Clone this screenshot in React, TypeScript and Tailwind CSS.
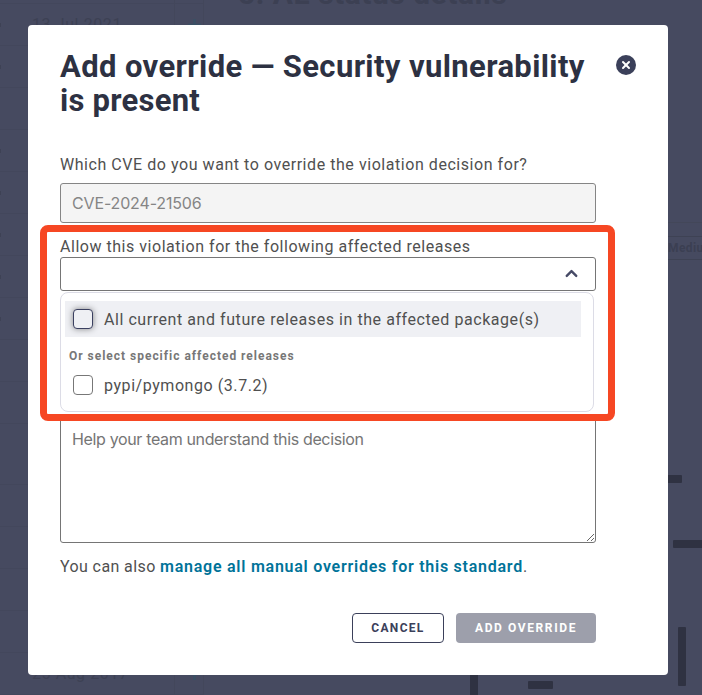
import { ReactNode } from 'react';
import { ChevronUp, X } from 'lucide-react';

const rows = [
    { date: '', height: 'h-[4px]' },
    { date: '13 Jul 2021', height: 'h-[42px]', dot: true },
    { date: '', height: 'h-[42px]', dot: true },
    { date: '', height: 'h-[42px]' },
    { date: '', height: 'h-[42px]', dot: true },
    { date: '', height: 'h-[42px]', dot: true },
    { date: '', height: 'h-[42px]', dot: true },
    { date: '', height: 'h-[42px]', dot: true },
    { date: '', height: 'h-[42px]', dot: true },
    { date: '', height: 'h-[42px]' },
    { date: '', height: 'h-[42px]' },
    { date: '', height: 'h-[61px]' },
    { date: '', height: 'h-[42px]' },
    { date: '', height: 'h-[42px]' },
    { date: '', height: 'h-[42px]' },
    { date: '', height: 'h-[42px]' },
    { date: '25 Aug 2017', height: 'h-[42px]' },
];

function Backdrop() {
    return (
        <div className="flex h-full w-full bg-[#464a60]">
            <div className="flex w-[204px] flex-col border-r border-[#43475b]">
                {rows.map((row, i) => (
                    <div key={i} className={`${row.height} flex shrink-0 items-center border-b border-[#43475c]`}>
                        <span className={`h-[4px] w-px ${row.dot ? 'bg-[#3e4255]' : ''}`} />
                        <span className="ml-[31px] w-[142px] text-[16px] tracking-[0.6px] whitespace-nowrap text-[#3d4154]">{row.date}</span>
                        <span className="h-full w-px bg-[#43475b]" />
                        {row.date && (
                            <span className="ml-[13px] flex h-[12px] w-[13px] items-center justify-center">
                                <svg width="13" height="12" viewBox="0 0 13 12" stroke="#3a5064" strokeWidth="2.5">
                                    <path d="M6.5 0v12M0 6h13" />
                                </svg>
                            </span>
                        )}
                    </div>
                ))}
            </div>
            <div className="relative flex-1">
                <h2 className="-mt-[22px] ml-[34px] text-[30px] leading-[32px] font-bold tracking-[0.5px] whitespace-nowrap text-[#3c4053]">
                    5. AL status details
                </h2>
                <div className="absolute top-[222px] right-0 w-[40px] border-t border-[#434759] pt-[13px]">
                    <div className="border-y border-[#3e4254] pl-[6px] text-[12px] leading-[22px] font-bold tracking-[0.4px] text-[#3b3f52]">Mediu</div>
                </div>
                <svg className="absolute top-0 right-0" width="500" height="695" viewBox="202 0 500 695" fill="#2f3242">
                    <rect x="660" y="475" width="22" height="8" rx="1" />
                    <rect x="673" y="540" width="40" height="8" rx="1" />
                    <rect x="678" y="627" width="8" height="59" rx="1" />
                    <rect x="470" y="660" width="8" height="40" rx="1" />
                    <rect x="528" y="681" width="25" height="8" rx="1" />
                </svg>
            </div>
        </div>
    );
}

function Option({ children, active }: { children: ReactNode; active?: boolean }) {
    return (
        <div className={`flex h-9 w-[516px] items-center pl-2 ${active ? 'bg-[#eff0f4]' : ''}`}>
            <span
                className={`h-5 w-5 rounded-[4px] border ${
                    active ? 'border-[#3b4060] bg-[#eff0f4] shadow-[0_0_6px_rgba(0,0,0,0.45)]' : 'border-[#777] bg-white'
                }`}
            />
            <span className="ml-[11px] pt-[2px] text-[16px] tracking-[0.56px] whitespace-nowrap">{children}</span>
        </div>
    );
}

export default function App() {
    return (
        <div className="relative h-[695px] w-[702px] overflow-hidden font-['Roboto',sans-serif]">
            <Backdrop />

            {/* Modal */}
            <div className="absolute inset-0 flex items-center pt-[5px] pl-7">
                <div className="relative h-[650px] w-[640px] rounded-[4px] bg-white px-8 pt-[25px] text-[#505050]">
                    <div className="flex h-[103px] items-start justify-between">
                        <h1 className="w-[550px] text-[31px] leading-[34px] font-bold text-[#2d3142]">
                            <span className="block tracking-[0.38px] whitespace-nowrap">Add override — Security vulnerability</span>
                            <span className="block tracking-[0.25px]">is present</span>
                        </h1>
                        <button className="mt-[5px] flex h-5 w-5 items-center justify-center rounded-full bg-[#3b405a] text-white">
                            <X size={12} strokeWidth={4} />
                        </button>
                    </div>

                    <label className="block h-[30px] text-[16px] leading-6 tracking-[0.55px] whitespace-nowrap">
                        Which CVE do you want to override the violation decision for?
                    </label>
                    <div className="flex h-10 w-[536px] items-center rounded-[3px] border border-[#858585] bg-[#f4f4f4] pl-[11px] font-['Inter',sans-serif] text-[16px] tracking-[-0.15px] text-[#858585]">
                        CVE-2024-21506
                    </div>

                    <label className="mt-[12px] block h-[22px] text-[16px] leading-6 tracking-[0.53px] whitespace-nowrap">
                        Allow this violation for the following affected releases
                    </label>
                    <div className="relative">
                        <div className="flex h-[34px] w-[536px] items-center justify-end rounded-[3px] border border-[#757575] bg-white pr-[14px] pb-[2px] text-[#464a66]">
                            <ChevronUp size={19} strokeWidth={3} />
                        </div>
                        {/* Dropdown */}
                        <div className="absolute top-[35px] left-0 z-10 h-[120px] w-[534px] rounded-[8px] border border-[#dcdce6] bg-white pt-2 pl-1">
                            <Option active>All current and future releases in the affected package(s)</Option>
                            <div className="h-[30px] pl-1 text-[12px] leading-[38px] font-bold tracking-[0.98px] text-[#777]">
                                Or select specific affected releases
                            </div>
                            <Option>pypi/pymongo (3.7.2)</Option>
                        </div>
                    </div>

                    <textarea
                        className="mt-[124px] block h-[128px] w-[536px] resize rounded-[3px] border border-[#757575] px-[11px] pt-[11px] font-['Inter',sans-serif] text-[16px] tracking-[-0.35px] placeholder:text-[#757575]"
                        placeholder="Help your team understand this decision"
                    />

                    <p className="mt-[12px] text-[16px] leading-6 tracking-[0.4px] whitespace-nowrap">
                        You can also{' '}
                        <a className="font-semibold tracking-[0.75px] text-[#007399]">manage all manual overrides for this standard</a>.
                    </p>

                    <div className="mt-[34px] flex w-[536px] justify-end gap-3">
                        <button className="h-[30px] w-[92px] rounded-[4px] border border-[#3b405a] text-[12px] font-bold tracking-[1.3px] text-[#3b405a]">
                            CANCEL
                        </button>
                        <button className="h-[30px] w-[140px] rounded-[4px] bg-[#9d9fab] text-[12px] font-bold tracking-[1.6px] text-white">
                            ADD OVERRIDE
                        </button>
                    </div>

                    {/* Highlight */}
                    <div className="pointer-events-none absolute top-[200px] left-3 z-20 h-[196px] w-[575px] rounded-[8px] border-[7px] border-[#f64723]" />
                </div>
            </div>
        </div>
    );
}
